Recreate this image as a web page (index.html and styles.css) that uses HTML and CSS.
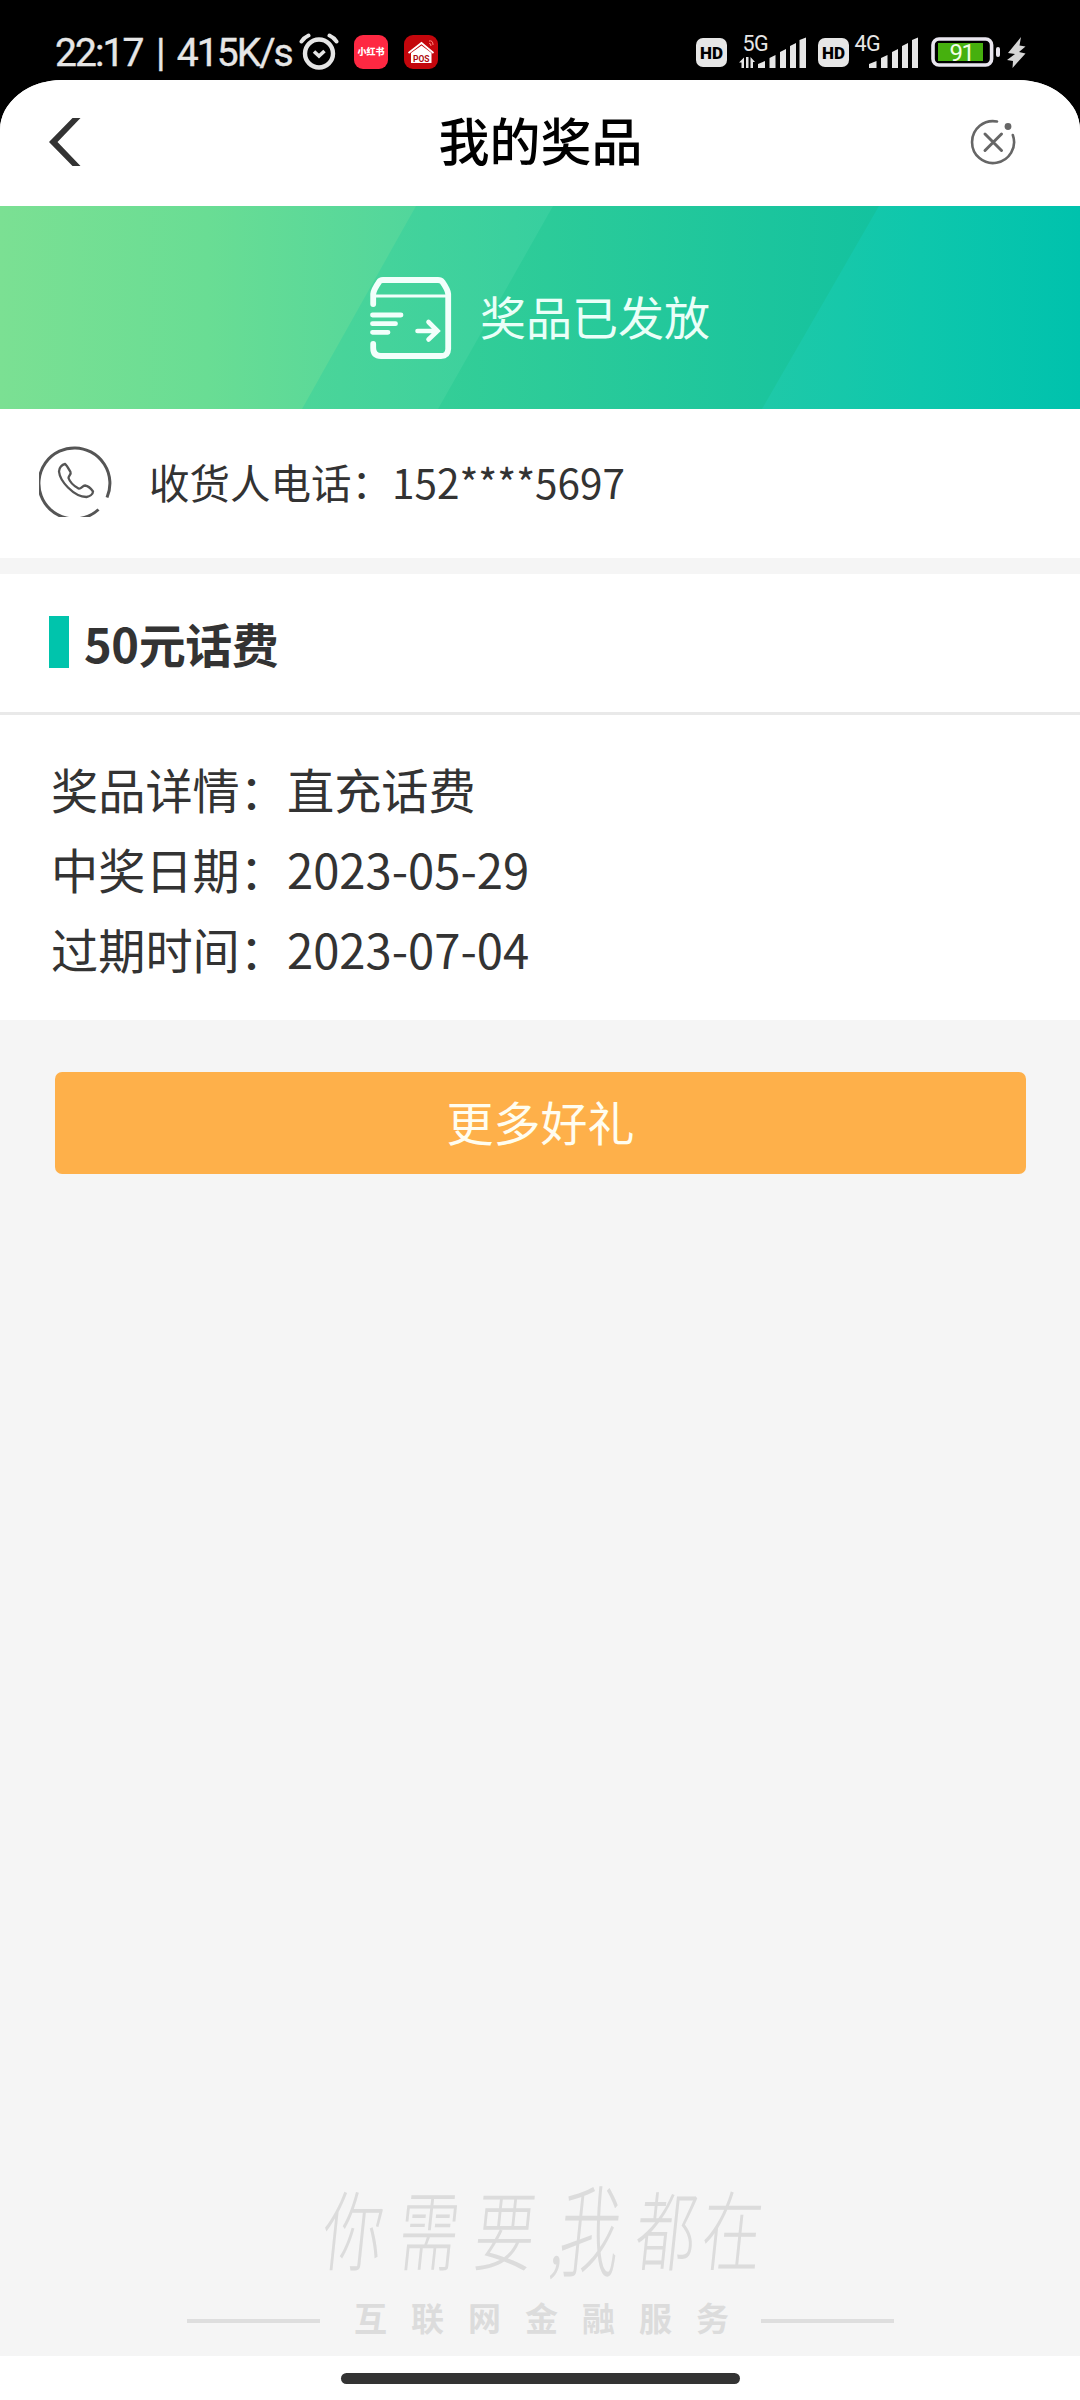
FILE: index.html
```html
<!DOCTYPE html>
<html lang="zh-CN">
<head>
    <meta charset="UTF-8">
    <meta name="viewport" content="width=device-width, initial-scale=1.0">
    <title>我的奖品</title>
    <link rel="stylesheet" href="styles.css">
</head>
<body>
    <div class="status-bar">
        <div class="status-left">
            <span class="clock">22:17 | 415K/s</span>
            <svg class="alarm" width="40" height="38" viewBox="0 0 40 38" fill="none" stroke="#e6e6e6" stroke-linecap="round">
                <circle cx="20" cy="21.5" r="14" stroke-width="4.4"/>
                <path d="M2.5 9.5 Q5 5.5 9.5 3.5 M37.5 9.5 Q35 5.5 30.5 3.5" stroke-width="4"/>
                <path d="M15 19.5 L20 24 L25.5 19" stroke-width="3.6" stroke-linecap="butt"/>
            </svg>
            <span class="app-icon app-red">小红书</span>
            <span class="app-icon app-pos">
                <svg width="34" height="34" viewBox="0 0 34 34">
                    <path d="M4.5 18 L17.5 8 L29.5 18" fill="none" stroke="#fff" stroke-width="1.8"/>
                    <path d="M7 18 L17.5 10.5 L27.5 18 V28 H7 Z" fill="#fff"/>
                    <path d="M25 6 Q29 5 29 10 M25 8.5 Q27 8 27 11" fill="none" stroke="#ff8a80" stroke-width="1"/>
                    <text x="17.3" y="26.5" text-anchor="middle" class="pos-text">POS</text>
                </svg>
            </span>
        </div>
        <div class="status-right">
            <span class="hd">HD</span>
            <svg class="signal" width="70" height="44" viewBox="0 -8 70 44" fill="#e6e6e6">
                <text x="5.5" y="17" class="net-text">5G</text>
                <path d="M2 28.5 L7 23.500 V34 H4.500 V28.500 Z M9 23 H11.500 V34 H9 Z M13.500 23 L18 28 H16 V34 H13.500 Z"/>
                <path d="M21 34 V30 L28 27 V34 Z M32.500 34 V24 L38.500 21 V34 Z M43 34 V18 L49 15 V34 Z M53 34 V12 L59 9 V34 Z M62.500 34 V6 L69 3.500 V34 Z"/>
            </svg>
            <span class="hd">HD</span>
            <svg class="signal signal-4g" width="66" height="44" viewBox="0 -8 66 44" fill="#e6e6e6">
                <text x="2.500" y="17" class="net-text">4G</text>
                <path d="M17 34 V30 L24.500 27 V34 Z M29 34 V24 L35.500 21 V34 Z M40 34 V18 L46 15 V34 Z M50 34 V12 L56 9 V34 Z M60 34 V6 L66 3.500 V34 Z"/>
            </svg>
            <svg class="battery" width="70" height="32" viewBox="0 0 70 32">
                <rect x="2" y="3" width="58.600" height="26" rx="6" fill="none" stroke="#e9e6ef" stroke-width="3.600"/>
                <rect x="7" y="7" width="45" height="18" fill="#46b00e"/>
                <rect x="65" y="11" width="4" height="10" rx="2" fill="#e9e6ef"/>
                <text x="30.500" y="25" text-anchor="middle" class="battery-text">91</text>
            </svg>
            <svg width="20" height="32" viewBox="0 0 20 32" fill="#d6d6d6">
                <path d="M14 0 L1 16 L8 17 L0 23 L6 24 L5.500 31 L18.500 16.500 L12 15 L18.500 9.500 L12.500 8.500 Z"/>
            </svg>
        </div>
    </div>

    <div class="page">
        <header class="nav">
            <svg class="back" width="34" height="50" viewBox="0 0 34 50">
                <path d="M24.500 1 H32.500 L9.500 25 L32.500 49 H24.500 L1 25 Z" fill="#333"/>
            </svg>
            <h1>我的奖品</h1>
            <svg class="close" width="48" height="48" viewBox="0 0 48 48" fill="none" stroke="#666" stroke-width="2.600" stroke-linecap="round">
                <path d="M28 3.500 A21 21 0 1 0 43.800 17"/>
                <path d="M16 16 L32.500 32.500 M32.500 16 L16 32.500" stroke-width="3"/>
                <circle cx="39" cy="8.500" r="3.400" fill="#666" stroke="none"/>
            </svg>
        </header>

        <div class="banner">
            <svg class="banner-bg" width="1080" height="203" viewBox="0 0 1080 203">
                <defs>
                    <linearGradient id="g1" gradientUnits="userSpaceOnUse" x1="0" y1="0" x2="416" y2="0">
                        <stop offset="0" stop-color="#7be093"/><stop offset="0.500" stop-color="#69dd94"/><stop offset="1" stop-color="#51d69c"/>
                    </linearGradient>
                    <linearGradient id="g2" gradientUnits="userSpaceOnUse" x1="302" y1="0" x2="553" y2="0">
                        <stop offset="0" stop-color="#4bd599"/><stop offset="1" stop-color="#37cf9f"/>
                    </linearGradient>
                    <linearGradient id="g3" gradientUnits="userSpaceOnUse" x1="438" y1="0" x2="879" y2="0">
                        <stop offset="0" stop-color="#34ce97"/><stop offset="1" stop-color="#13c29f"/>
                    </linearGradient>
                    <linearGradient id="g4" gradientUnits="userSpaceOnUse" x1="762" y1="0" x2="1080" y2="0">
                        <stop offset="0" stop-color="#1fc9a8"/><stop offset="0.500" stop-color="#0ec7ac"/><stop offset="1" stop-color="#00c2ad"/>
                    </linearGradient>
                </defs>
                <rect width="1080" height="203" fill="url(#g1)"/>
                <path d="M416 0 H1080 V203 H302 Z" fill="url(#g2)"/>
                <path d="M553 0 H1080 V203 H438 Z" fill="url(#g3)"/>
                <path d="M879 0 H1080 V203 H762 Z" fill="url(#g4)"/>
            </svg>
            <svg class="gift" width="82" height="82" viewBox="0 0 82 82" fill="none" stroke="#f2fffb" stroke-linecap="round">
                <path d="M3.200 27 V17 Q3.500 13 9 5 Q10 3 13 3 H68 Q71 3 72.500 5 Q78 13 78.200 17 V72 Q78 79 71 79 H11 Q3.200 79 3.200 71 V67" stroke-width="5.800"/>
                <path d="M5 19 H77" stroke-width="3"/>
                <path d="M2.500 38 H31 M2.500 46.700 H25.500 M2.500 55.300 H18" stroke-width="4.800"/>
                <path d="M47.500 54 H67 M58.500 45 L67.500 54 L58.500 62.500" stroke-width="4.600"/>
            </svg>
            <span>奖品已发放</span>
        </div>

        <div class="phone">
            <svg width="76" height="72" viewBox="0 0 76 72" fill="none" stroke="#555">
                <path d="M68 52.500 A35.500 35.500 0 1 0 59.500 64.500" stroke-width="3"/>
                <path d="M20 26.500 C20 22.500 23 19.500 26 19 C28 20.500 29.500 23.500 31.500 27 C32.500 29 29.500 31 29.500 33 C31 37.500 35 41 39.500 43.500 C42 44.500 43.500 40.500 46 40.500 C49 41 52 43.500 54 46.500 C54 49.500 50.500 51.500 47.500 52 C41.500 52 35 48.500 29 42.500 C24 37.500 20.500 31.500 20 26.500 Z" stroke-width="2.300"/>
            </svg>
            <span>收货人电话：152****5697</span>
        </div>

        <div class="prize-title">
            <h2>50元话费</h2>
        </div>
        <div class="prize-info">
            <p>奖品详情：直充话费</p>
            <p>中奖日期：2023-05-29</p>
            <p>过期时间：2023-07-04</p>
        </div>

        <button class="more" type="button">更多好礼</button>

        <footer class="footer">
            <div class="slogan">
                <span>你</span><span>需</span><span>要</span><span class="comma">,</span><span class="tall">我</span><span>都</span><span>在</span>
            </div>
            <div class="service"><span>互联网金融服务</span></div>
        </footer>
    </div>

    <div class="home-bar"></div>
</body>
</html>
```

FILE: styles.css
```css
* {
    box-sizing: border-box;
}

body {
    margin: 0;
    width: 1080px;
    height: 2400px;
    overflow: hidden;
    display: flex;
    flex-direction: column;
    background: #000;
    color: #333;
    font-family: "Noto Sans CJK SC", "Noto Sans", sans-serif;
}

/* status bar */
.status-bar {
    height: 80px;
    flex: none;
    display: flex;
    justify-content: space-between;
    padding: 0 53px 0 55px;
    color: #e6e6e6;
}

.status-left,
.status-right {
    display: flex;
    align-items: flex-start;
}

.clock {
    width: 244px;
    margin-top: 29px;
    font-family: Roboto, sans-serif;
    font-size: 39px;
    line-height: 48px;
    letter-spacing: -1.9px;
    word-spacing: 5.5px;
    white-space: nowrap;
    -webkit-text-stroke: 0.4px #e6e6e6;
}

.alarm {
    margin-top: 32px;
}

.app-icon {
    width: 34px;
    height: 34px;
    margin: 35px 0 0 15px;
    border-radius: 9px;
    overflow: hidden;
}

.app-red {
    background: #fe2842;
    color: #fff;
    font-size: 9px;
    font-weight: 900;
    line-height: 33px;
    text-align: center;
    white-space: nowrap;
}

.app-pos {
    margin-left: 16px;
    background: #c4060c;
}

.pos-text {
    font: bold 8.5px Roboto, sans-serif;
    fill: #b00a10;
}

.hd {
    width: 31px;
    height: 29px;
    margin-top: 37.5px;
    border-radius: 7px;
    background: #e6e6e6;
    color: #000;
    font: 900 17px/30px Roboto, sans-serif;
    text-align: center;
}

.signal {
    margin: 26px 11px 0 10px;
}

.signal-4g {
    margin: 26px 13px 0 3px;
}

.net-text {
    font: 21.5px Roboto, sans-serif;
    letter-spacing: -0.5px;
}

.battery {
    margin: 36px 6px 0 0;
}

.battery + svg {
    margin-top: 37px;
}

.battery-text {
    font: 24px Roboto, sans-serif;
    letter-spacing: -1.5px;
    fill: #f4ffe8;
}

/* page */
.page {
    height: 2276px;
    display: flex;
    flex-direction: column;
    border-radius: 62px 62px 0 0 / 50px 50px 0 0;
    background: #f5f5f5;
    overflow: hidden;
}

.nav {
    height: 126px;
    flex: none;
    display: flex;
    align-items: center;
    justify-content: space-between;
    padding: 0 63px 2px 48px;
    background: #fff;
}

.nav h1 {
    margin: 0 0 6px 30px;
    color: #000;
    font-size: 51px;
    font-weight: 500;
    line-height: 72px;
}

.banner {
    position: relative;
    height: 203px;
    flex: none;
    display: flex;
    align-items: center;
    padding: 20px 0 0 370px;
    color: #eafff8;
    font-size: 46px;
}

.banner-bg {
    position: absolute;
    left: 0;
    top: 0;
}

.gift,
.banner span {
    position: relative;
}

.banner span {
    margin: 0 0 6px 28px;
}

.phone {
    height: 149px;
    flex: none;
    display: flex;
    align-items: center;
    padding: 0 0 5px 39px;
    background: #fff;
    font-size: 40.5px;
}

.phone span {
    margin-left: 34px;
}

.prize-title {
    height: 141px;
    flex: none;
    margin-top: 16px;
    padding: 42px 0 0 49px;
    border-bottom: 3px solid #e9e9e9;
    background: #fff;
}

.prize-title h2 {
    height: 52px;
    margin: 0;
    padding-left: 15px;
    border-left: 20px solid #00c4ac;
    font-size: 47px;
    font-weight: 700;
    line-height: 53px;
    letter-spacing: -0.4px;
}

.prize-info {
    height: 305px;
    flex: none;
    padding: 34px 0 0 51px;
    background: #fff;
}

.prize-info p {
    margin: 0;
    font-size: 47.2px;
    line-height: 80px;
}

.more {
    height: 102px;
    flex: none;
    margin: 52px 54px 0 55px;
    padding: 0 0 5px;
    border: none;
    border-radius: 7px;
    background: #feb04a;
    color: #fffdf0;
    font-family: inherit;
    font-size: 47px;
    line-height: 97px;
}

.footer {
    margin-top: auto;
    padding-bottom: 18px;
    color: #dcdcdc;
}

/* handwritten style slogan */
.slogan {
    display: flex;
    padding-left: 324px;
    font-size: 60px;
    font-weight: 300;
    line-height: 100px;
    transform: skewX(-6deg) scaleY(1.45);
}

.slogan span {
    width: 76px;
}

.slogan .comma {
    width: 9px;
}

.slogan .tall {
    transform: scaleY(1.15);
}

.slogan span:nth-child(n+6) {
    width: 66px;
}

.service {
    display: flex;
    align-items: center;
    gap: 33px;
    width: 707px;
    margin: 22px auto 0 187px;
    font-size: 33px;
    font-weight: 700;
    line-height: 40px;
}

.service span {
    position: relative;
    left: 1px;
    top: -1px;
    letter-spacing: 24px;
    margin-right: -24px;
}

.service::before,
.service::after {
    content: "";
    flex: 1;
    height: 4px;
    margin-top: 5px;
    background: #dedede;
}

/* system home indicator */
.home-bar {
    height: 44px;
    flex: none;
    padding-top: 17px;
    background: #fff;
}

.home-bar::before {
    content: "";
    display: block;
    width: 399px;
    height: 11px;
    margin: 0 auto;
    border-radius: 6px;
    background: #333;
}
```
